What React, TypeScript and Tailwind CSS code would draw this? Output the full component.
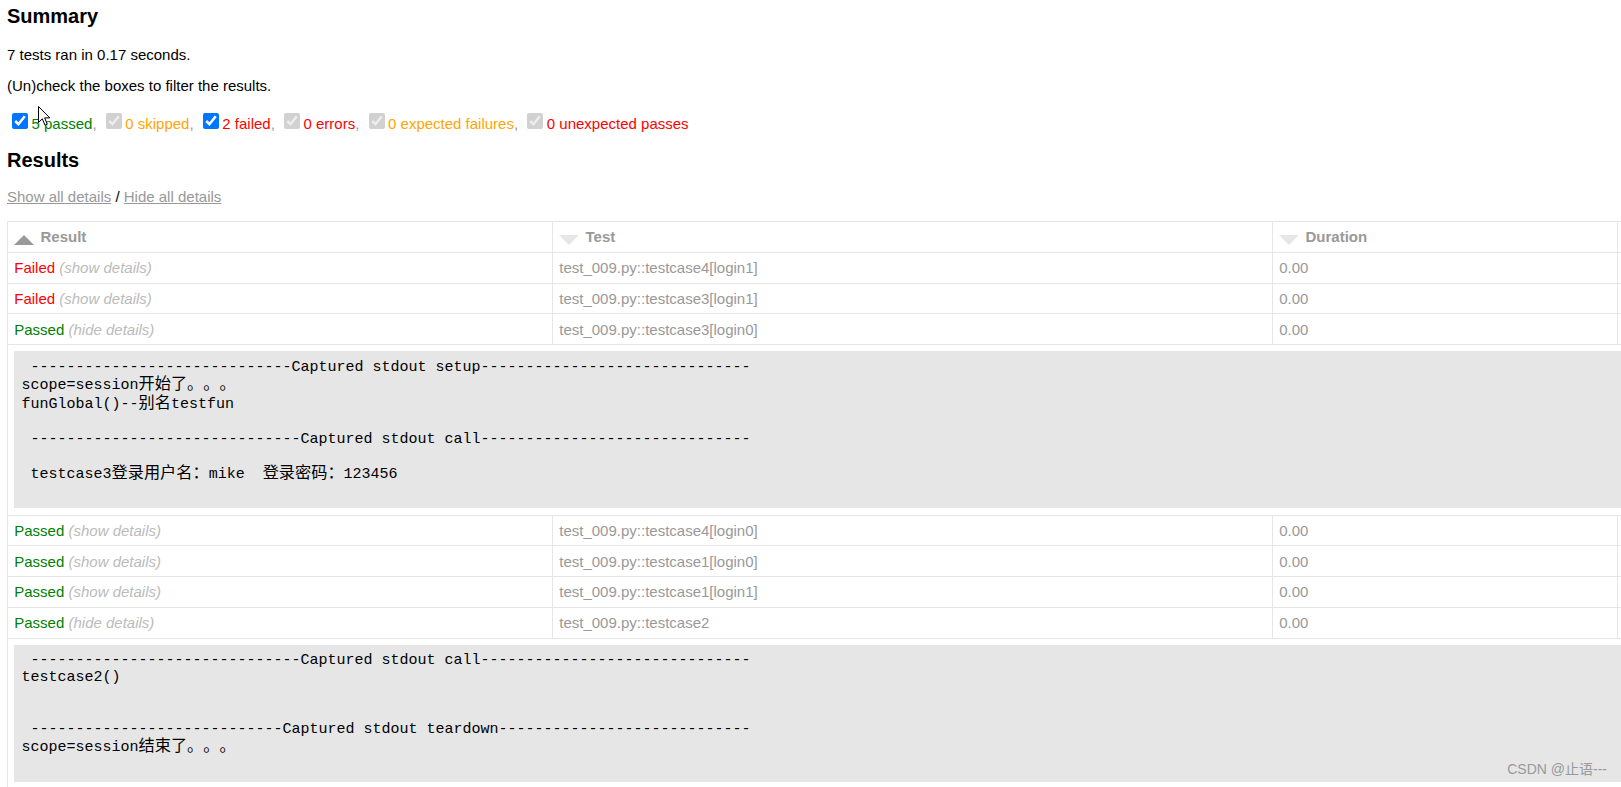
import React from "react";

// pytest-html report, summary + results table

type Result = {
  outcome: "Passed" | "Failed";
  open: boolean;
  test: string;
  log?: string[];
};

const bar = (title: string, left: number, right: number) =>
  " " + "-".repeat(left) + title + "-".repeat(right) + " ";

const setupLog = [
  bar("Captured stdout setup", 29, 30),
  "scope=session开始了。。。",
  "funGlobal()--别名testfun",
  "",
  bar("Captured stdout call", 30, 30),
  "",
  " testcase3登录用户名：mike  登录密码：123456",
  "",
];

const teardownLog = [
  bar("Captured stdout call", 30, 30),
  "testcase2()",
  "",
  "",
  bar("Captured stdout teardown", 28, 28),
  "scope=session结束了。。。",
  "",
];

const results: Result[] = [
  { outcome: "Failed", open: false, test: "test_009.py::testcase4[login1]" },
  { outcome: "Failed", open: false, test: "test_009.py::testcase3[login1]" },
  { outcome: "Passed", open: true, test: "test_009.py::testcase3[login0]", log: setupLog },
  { outcome: "Passed", open: false, test: "test_009.py::testcase4[login0]" },
  { outcome: "Passed", open: false, test: "test_009.py::testcase1[login0]" },
  { outcome: "Passed", open: false, test: "test_009.py::testcase1[login1]" },
  { outcome: "Passed", open: true, test: "test_009.py::testcase2", log: teardownLog },
];

const filters = [
  { label: "5 passed", color: "text-[#008000]", enabled: true },
  { label: "0 skipped", color: "text-[#ffa500]", enabled: false },
  { label: "2 failed", color: "text-[#ff0000]", enabled: true },
  { label: "0 errors", color: "text-[#ff0000]", enabled: false },
  { label: "0 expected failures", color: "text-[#ffa500]", enabled: false },
  { label: "0 unexpected passes", color: "text-[#ff0000]", enabled: false },
];

const cjk = /[\u3000-\u9fff\uff00-\uffef]/;
const cjkRuns = /([\u3000-\u9fff\uff00-\uffef]+)/;

function SortIcon({ active }: { active?: boolean }) {
  return (
    <svg className="mt-[6.25px] mr-[6.25px] shrink-0" width="20" height="10" viewBox="0 0 20 10">
      {active ? (
        <polygon points="0,10 20,10 10,0" fill="#999999" />
      ) : (
        <polygon points="0,0 20,0 10,10" fill="#e6e6e6" />
      )}
    </svg>
  );
}

function Log({ lines }: { lines: string[] }) {
  return (
    <div className="bg-[#e6e6e6] border border-[#e6e6e6] p-[6.25px] text-black text-[15px] font-['Liberation_Mono','Noto_Sans_CJK_SC',monospace] [text-spacing-trim:space-all]">
      {lines.map((line, i) => (
        <div
          key={i}
          className={`whitespace-pre ${
            cjk.test(line) ? "h-[18.75px] leading-[18.75px]" : "h-[17.25px] leading-[17.25px]"
          }`}
        >
          {line
            ? line.split(cjkRuns).map((part, j) =>
                j % 2 === 1 ? (
                  <span key={j} className="text-[16.2px]">
                    {part}
                  </span>
                ) : (
                  part
                )
              )
            : " "}
        </div>
      ))}
    </div>
  );
}

export default function App() {
  const cell = "border border-[#e6e6e6] px-[6.25px] py-[6.25px] text-left align-top";

  return (
    <div className="relative w-screen h-screen overflow-hidden bg-white font-['Liberation_Sans',Arial,'Noto_Sans_CJK_SC',sans-serif] text-[#999]">
      <div className="pl-[7px] pt-[4px]">
        <h2 className="text-[20px] leading-[24px] font-bold text-black">Summary</h2>
        <p className="mt-[17.5px] text-[15px] leading-[17.25px] text-black">7 tests ran in 0.17 seconds.</p>
        <p className="mt-[14.5px] text-[15px] leading-[17.25px] text-black">
          (Un)check the boxes to filter the results.
        </p>

        <div className="mt-[18.65px] h-[20px] flex items-center text-[15px] leading-[17.25px] whitespace-pre">
          {filters.map((f, i) => (
            <React.Fragment key={f.label}>
              <input
                type="checkbox"
                defaultChecked
                disabled={!f.enabled}
                className="w-[16px] h-[16px] ml-[5px] mr-[3.5px] mb-[4px] shrink-0"
              />
              <span className={f.color}>{f.label}</span>
              {i < filters.length - 1 && <span>, </span>}
            </React.Fragment>
          ))}
        </div>

        <h2 className="mt-[15.3px] text-[20px] leading-[24px] font-bold text-black">Results</h2>
        <p className="mt-[15.5px] text-[15px] leading-[17.25px] text-black">
          <a className="text-[#999] underline cursor-pointer">Show all details</a> /{" "}
          <a className="text-[#999] underline cursor-pointer">Hide all details</a>
        </p>

        <table className="mt-[15.85px] w-[1710px] table-fixed border-collapse border border-[#e6e6e6] text-[15px] leading-[17.25px] text-[#999]">
          <colgroup>
            <col className="w-[545px]" />
            <col className="w-[720px]" />
            <col className="w-[345px]" />
            <col className="w-[100px]" />
          </colgroup>
          <thead>
            <tr>
              <th className={`${cell} font-bold`}>
                <div className="flex">
                  <SortIcon active />
                  Result
                </div>
              </th>
              <th className={`${cell} font-bold`}>
                <div className="flex">
                  <SortIcon />
                  Test
                </div>
              </th>
              <th className={`${cell} font-bold`}>
                <div className="flex">
                  <SortIcon />
                  Duration
                </div>
              </th>
              <th className={`${cell} font-bold`}></th>
            </tr>
          </thead>
          {results.map((r) => (
            <tbody key={r.test}>
              <tr>
                <td className={cell}>
                  <span className={r.outcome === "Passed" ? "text-[#008000]" : "text-[#ff0000]"}>
                    {r.outcome}
                  </span>
                  <span className="italic text-[#bbb]">
                    {r.open ? " (hide details)" : " (show details)"}
                  </span>
                </td>
                <td className={cell}>{r.test}</td>
                <td className={cell}>0.00</td>
                <td className={cell}></td>
              </tr>
              {r.log && (
                <tr>
                  <td colSpan={4} className="border border-[#e6e6e6] p-[6.25px]">
                    <Log lines={r.log} />
                  </td>
                </tr>
              )}
            </tbody>
          ))}
        </table>
      </div>

      {/* mouse pointer captured in the screenshot */}
      <svg className="absolute left-[38px] top-[106px]" width="13" height="21" viewBox="0 0 13 21">
        <path d="M0.5 0.5 L0.5 16.5 L4.3 12.8 L7 19.2 L9.3 18.2 L6.6 11.9 L11.8 11.9 Z" fill="white" stroke="black" strokeWidth="1" />
      </svg>

      <div className="absolute right-[14px] top-[761px] text-[14px] leading-[17px] text-[#999] font-['Liberation_Sans','Noto_Sans_CJK_SC',sans-serif]">
        CSDN @止语---
      </div>
    </div>
  );
}
